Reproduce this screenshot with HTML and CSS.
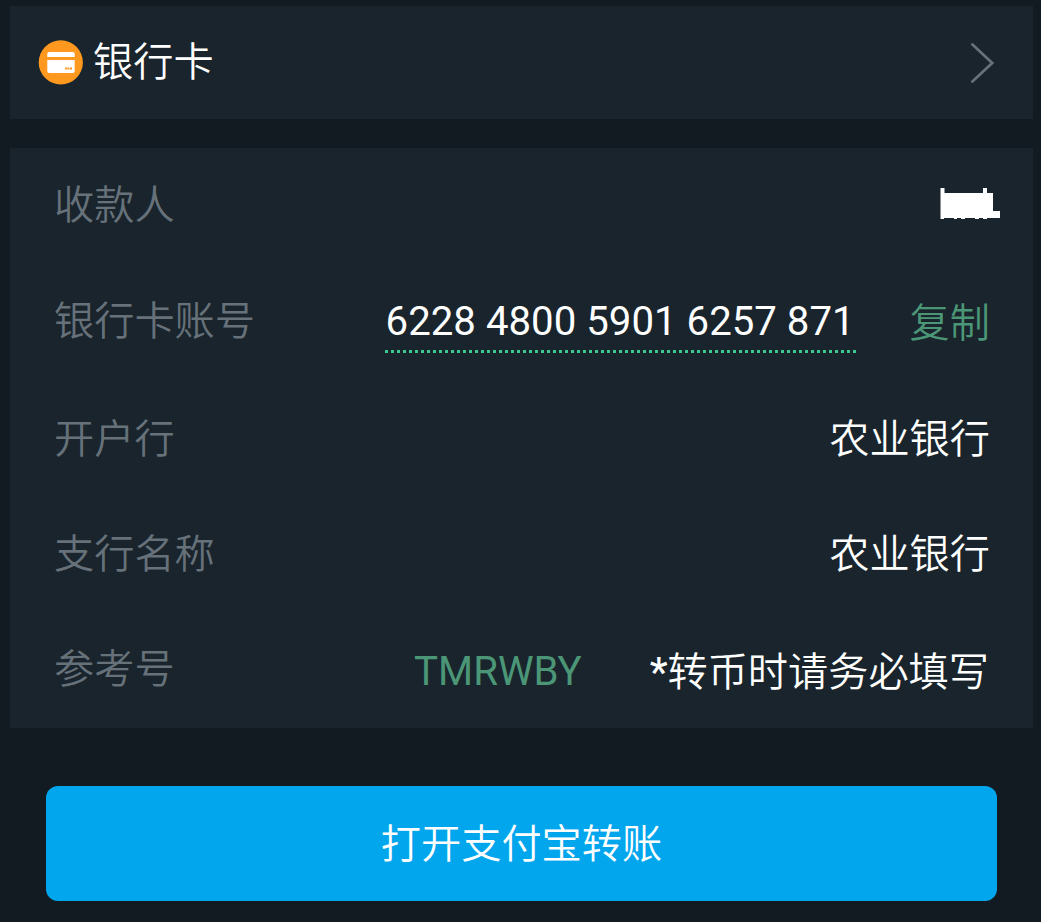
FILE: index.html
```html
<!DOCTYPE html>
<html lang="zh-CN">
<head>
<meta charset="utf-8">
<title>银行卡</title>
<link rel="stylesheet" href="styles.css">
</head>
<body>
<main class="page">
  <header class="method">
    <svg class="method-icon" width="46" height="46" viewBox="0 0 46 46">
      <circle cx="22.8" cy="22.4" r="22.1" fill="#ff981f"/>
      <path d="M9.3 17V13.8Q9.3 12 11.1 12H34.9Q36.7 12 36.7 13.8V17ZM9.3 20H36.7V31.2Q36.7 33 34.9 33H11.1Q9.3 33 9.3 31.2Z" fill="#fff"/>
      <path d="M27 28.5H34" stroke="#ff981f" stroke-width="2" stroke-dasharray="2 .5"/>
    </svg>
    <span class="method-name">银行卡</span>
    <svg class="chevron" width="24" height="42" viewBox="0 0 24 42">
      <path d="M2.4 2.5L22.2 21L2.4 39.5" fill="none" stroke="#66717a" stroke-width="2.7" stroke-linecap="round"/>
    </svg>
  </header>
  <section class="details">
    <div class="row">
      <span class="label">收款人</span>
      <svg class="masked-name" width="60" height="32" viewBox="0 0 60 32">
        <path d="M.5 0H4.5V5H43V0H47V5H53V23H60V30H47V31H43V30H39V31H35V30H25V31H21V30H17V31H14V30H4V31H.5Z" fill="#fff"/>
      </svg>
    </div>
    <div class="row">
      <span class="label">银行卡账号</span>
      <span class="account">6228 4800 5901 6257 871</span>
      <span class="copy">复制</span>
    </div>
    <div class="row bank">
      <span class="label">开户行</span>
      <span class="value">农业银行</span>
    </div>
    <div class="row branch">
      <span class="label">支行名称</span>
      <span class="value">农业银行</span>
    </div>
    <div class="row">
      <span class="label">参考号</span>
      <span class="reference">TMRWBY</span>
      <span class="hint"><span class="star">*</span>转币时请务必填写</span>
    </div>
  </section>
  <button class="pay" type="button">打开支付宝转账</button>
</main>
</body>
</html>
```
FILE: styles.css
```css
* { box-sizing: border-box; }
body { margin: 0; background: #131b22; }
.page {
  height: 922px;
  padding: 6px 8px 0 10px;
  overflow: hidden;
  color: #fff;
  font: 350 40.2px/60px Roboto, "Noto Sans CJK SC DemiLight", "Noto Sans CJK SC", sans-serif;
  white-space: nowrap;
}
.method {
  display: flex;
  align-items: center;
  height: 113px;
  padding: 0 39px 0 28px;
  background: #19242c;
}
.method-name { margin-left: 9px; padding-top: 1px; }
.chevron { margin-left: auto; }
.details {
  margin-top: 29px;
  padding: 0 43px 0 44px;
  background: #19242c;
}
.row { display: flex; align-items: center; height: 116px; }
.bank { padding-top: 3px; }
.branch { padding-top: 2px; }
.label { margin-right: auto; color: #66717a; }
.masked-name { margin: -4px -10px 0 0; }
.account {
  height: 61px;
  margin: 32px 54px 0 0;
  font-weight: 400;
  line-height: 52px;
  align-self: flex-start;
  width: 471px;
  padding-left: 1px;
  font-size: 40.2px;
  background: repeating-linear-gradient(90deg, #3bc98f 0 3px, transparent 3px 6px) left 54px / 100% 3px no-repeat;
}
.copy { padding-top: 3px; color: #4b9676; }
.reference { margin-right: 68px; padding-top: 4px; color: #4b9676; font-weight: 400; }
.hint { margin-right: 1px; padding-top: 6px; }
.star { font-weight: 500; }
.pay {
  display: block;
  width: 951px;
  height: 115px;
  margin: 58px 0 0 36px;
  padding: 2px 0 0;
  border: 0;
  border-radius: 12px;
  background: #02a6ed;
  color: #fff;
  font: inherit;
}
```
